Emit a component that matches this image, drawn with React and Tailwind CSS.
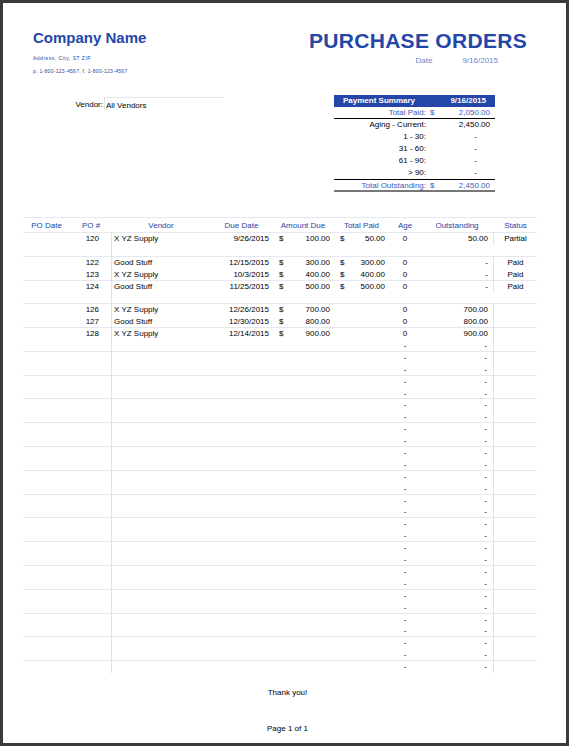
const blue = "text-[#2446a8]";

const data = [
  ["", "120", "X YZ Supply", "9/26/2015", "100.00", "50.00", "0", "50.00", "Partial"],
  null,
  ["", "122", "Good Stuff", "12/15/2015", "300.00", "300.00", "0", "-", "Paid"],
  ["", "123", "X YZ Supply", "10/3/2015", "400.00", "400.00", "0", "-", "Paid"],
  ["", "124", "Good Stuff", "11/25/2015", "500.00", "500.00", "0", "-", "Paid"],
  null,
  ["", "126", "X YZ Supply", "12/26/2015", "700.00", "", "0", "700.00", ""],
  ["", "127", "Good Stuff", "12/30/2015", "800.00", "", "0", "800.00", ""],
  ["", "128", "X YZ Supply", "12/14/2015", "900.00", "", "0", "900.00", ""],
];
const rows = [...data, ...Array(28).fill("dash")];

const grid = "grid grid-cols-[47px_42px_98px_63px_60px_57px_30px_74px_43px]";

function Row({ r, i }) {
  const line = i % 2 === 1 ? "border-b border-[#e4e8ee]" : "border-b border-transparent";
  if (r === null)
    return <div className={`${grid} h-[11.9px] ${line}`}><div /><div className="border-r border-[#e0e0e0]" /></div>;
  if (r === "dash")
    return (
      <div className={`${grid} h-[11.9px] ${line} leading-[11.9px]`}>
        <div /><div className="border-r border-[#e0e0e0]" /><div /><div /><div /><div />
        <div className="text-center">-</div>
        <div className="text-right pr-[6px] border-r border-[#e0e0e0]">-</div><div />
      </div>
    );
  return (
    <div className={`${grid} h-[11.9px] ${line} leading-[11.9px]`}>
      <div>{r[0]}</div>
      <div className="text-right pr-[12px] border-r border-[#e0e0e0]">{r[1]}</div>
      <div className="pl-[2px]">{r[2]}</div>
      <div className="text-right pr-[4px]">{r[3]}</div>
      <div className="flex justify-between pl-[6px] pr-[3px]"><span>$</span><span>{r[4]}</span></div>
      <div className="flex justify-between pl-[7px] pr-[5px]">{r[5] && <><span>$</span><span>{r[5]}</span></>}</div>
      <div className="text-center">{r[6]}</div>
      <div className="text-right pr-[5px] border-r border-[#e0e0e0]">{r[7]}</div>
      <div className="text-center">{r[8]}</div>
    </div>
  );
}

export default function App() {
  return (
    <div className="w-[569px] h-[746px] bg-[#3a3a3a] p-[3px] font-[Liberation_Sans,Arial,sans-serif]">
      <div className="w-full h-full bg-white relative text-[8px] text-black">
        <div className="flex justify-between pl-[30px] pr-[39px] pt-[26px]">
          <div>
            <div className={`text-[15px] font-bold ${blue} leading-[18px]`}>Company Name</div>
            <div className={`text-[5px] ${blue} mt-[8px] tracking-[0.5px]`}>Address, City, ST ZIP</div>
            <div className={`text-[5px] ${blue} mt-[5px] tracking-[0.3px]`}>p. 1-800-123-4567, f. 1-800-123-4567</div>
          </div>
          <div className="flex flex-col items-end">
            <div className={`text-[21px] font-bold ${blue} leading-[24px] tracking-[0.3px]`}>PURCHASE ORDERS</div>
            <div className="flex text-[#6a8ad0] mt-[2px] mr-[29px]">
              <span className="mr-[30px]">Date</span><span>9/16/2015</span>
            </div>
          </div>
        </div>

        <div className="flex mt-[22px]">
          <div className="w-[100px] text-right pt-[2px]">Vendor:</div>
          <div className="w-[119px] h-[12px] border-l border-t border-[#e4e4e4] pl-[1px] pt-[2px] ml-[1px]">All Vendors</div>
          <div className="ml-[111px] w-[161px] mt-[-2px]">
            <div className="flex justify-between bg-[#2446a8] text-white font-bold h-[12px] leading-[12px] px-[9px]">
              <span>Payment Summary</span><span>9/16/2015</span>
            </div>
            <div className="flex h-[12px] leading-[12px] border-b border-black text-[#3c5cb8]">
              <span className="w-[92px] text-right">Total Paid:</span><span className="ml-[4px]">$</span><span className="flex-1 text-right pr-[5px]">2,050.00</span>
            </div>
            {[["Aging - Current:", "2,450.00"], ["1 - 30:", "-"], ["31 - 60:", "-"], ["61 - 90:", "-"], ["> 90:", "-"]].map(([a, b]) => (
              <div key={a} className="flex h-[12px] leading-[12px]">
                <span className="w-[92px] text-right">{a}</span><span className={`flex-1 text-right ${b === "-" ? "pr-[18px]" : "pr-[5px]"}`}>{b}</span>
              </div>
            ))}
            <div className="flex h-[13px] leading-[12px] border-t border-black border-b-2 border-b-[#777] text-[#3c5cb8]">
              <span className="w-[92px] text-right">Total Outstanding:</span><span className="ml-[4px]">$</span><span className="flex-1 text-right pr-[5px]">2,450.00</span>
            </div>
          </div>
        </div>

        <div className="ml-[20px] mt-[25px] w-[514px]">
          <div className={`${grid} h-[16px] leading-[16px] border-t border-b border-[#e4e8ee] ${blue} text-center`}>
            {["PO Date", "PO #", "Vendor", "Due Date", "Amount Due", "Total Paid", "Age", "Outstanding", "Status"].map((h) => <div key={h}>{h}</div>)}
          </div>
          {rows.map((r, i) => <Row key={i} r={r} i={i} />)}
        </div>

        <div className="text-center mt-[14px] pl-[6px]">Thank you!</div>
        <div className="text-center mt-[24px] pl-[6px]">Page 1 of 1</div>
      </div>
    </div>
  );
}
